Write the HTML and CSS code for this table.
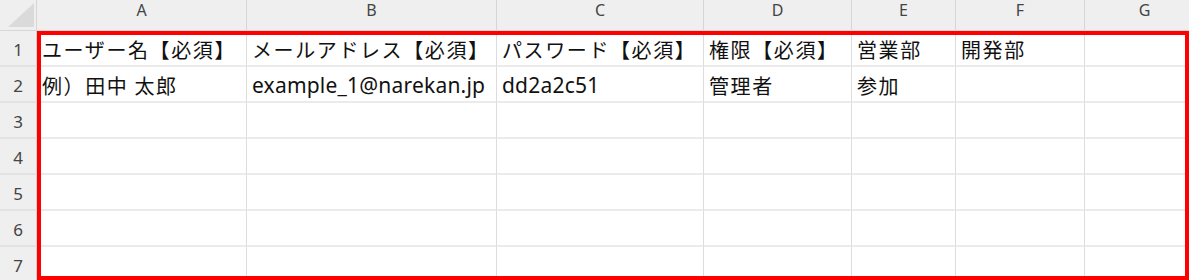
FILE: index.html
```html
<!DOCTYPE html>
<html lang="ja">
<head>
<meta charset="utf-8">
<title>ユーザー一括登録</title>
<link rel="stylesheet" href="styles.css">
</head>
<body>
<div class="sheet">
  <div class="grid">
    <div class="corner"><span class="corner-tri"></span></div>
    <div class="col-head">A</div>
    <div class="col-head">B</div>
    <div class="col-head">C</div>
    <div class="col-head">D</div>
    <div class="col-head">E</div>
    <div class="col-head">F</div>
    <div class="col-head">G</div>

    <div class="row-head">1</div>
    <div class="cell">ユーザー名【必須】</div>
    <div class="cell">メールアドレス【必須】</div>
    <div class="cell">パスワード【必須】</div>
    <div class="cell">権限【必須】</div>
    <div class="cell">営業部</div>
    <div class="cell">開発部</div>
    <div class="cell"></div>

    <div class="row-head">2</div>
    <div class="cell">例）田中 太郎</div>
    <div class="cell latin">example_1@narekan.jp</div>
    <div class="cell latin">dd2a2c51</div>
    <div class="cell">管理者</div>
    <div class="cell">参加</div>
    <div class="cell"></div>
    <div class="cell"></div>

    <div class="row-head">3</div>
    <div class="cell"></div><div class="cell"></div><div class="cell"></div><div class="cell"></div><div class="cell"></div><div class="cell"></div><div class="cell"></div>
    <div class="row-head">4</div>
    <div class="cell"></div><div class="cell"></div><div class="cell"></div><div class="cell"></div><div class="cell"></div><div class="cell"></div><div class="cell"></div>
    <div class="row-head">5</div>
    <div class="cell"></div><div class="cell"></div><div class="cell"></div><div class="cell"></div><div class="cell"></div><div class="cell"></div><div class="cell"></div>
    <div class="row-head">6</div>
    <div class="cell"></div><div class="cell"></div><div class="cell"></div><div class="cell"></div><div class="cell"></div><div class="cell"></div><div class="cell"></div>
    <div class="row-head">7</div>
    <div class="cell"></div><div class="cell"></div><div class="cell"></div><div class="cell"></div><div class="cell"></div><div class="cell"></div><div class="cell"></div>
  </div>
  <div class="highlight"></div>
</div>
</body>
</html>
```

FILE: styles.css
```css
html, body {
  margin: 0;
  padding: 0;
  background: #ffffff;
}

.sheet {
  position: relative;
  width: 1189px;
  height: 280px;
  overflow: hidden;
  font-family: "Noto Sans CJK JP", "Noto Sans", sans-serif;
}

.grid {
  display: grid;
  grid-template-columns: 37px 210px 250px 207px 148px 104px 129px 120px;
  grid-template-rows: 31px repeat(7, 36px);
}

.corner {
  position: relative;
  background: #efefef;
  border-right: 1px solid #d6d6d6;
  border-bottom: 1px solid #d6d6d6;
}

/* select-all triangle */
.corner-tri {
  position: absolute;
  right: 2px;
  bottom: 3px;
  width: 0;
  height: 0;
  border-left: 26px solid transparent;
  border-bottom: 24px solid #dadada;
}

.col-head {
  display: flex;
  justify-content: center;
  align-items: flex-start;
  background: #efefef;
  border-right: 1px solid #d6d6d6;
  border-bottom: 1px solid #d6d6d6;
  color: #444444;
  font-family: "Noto Sans", "Liberation Sans", sans-serif;
  font-size: 16px;
  line-height: 20px;
}

.row-head {
  display: flex;
  align-items: center;
  justify-content: center;
  background: #efefef;
  border-right: 1px solid #d0d0d0;
  border-bottom: 2px solid #e2e2e2;
  color: #444444;
  font-family: "Noto Sans", "Liberation Sans", sans-serif;
  font-size: 17px;
  padding-top: 2px;
}

.cell {
  display: flex;
  align-items: center;
  padding: 2px 0 0 5px;
  border-right: 1px solid #dcdcdc;
  border-bottom: 2px solid #ebebeb;
  color: #111111;
  font-size: 20px;
  letter-spacing: 1.6px;
  white-space: nowrap;
  overflow: hidden;
}

.cell.latin {
  font-family: "Noto Sans", "Noto Sans CJK JP", sans-serif;
  font-size: 21px;
  letter-spacing: 0.2px;
}

.highlight {
  position: absolute;
  left: 37px;
  top: 31px;
  width: 1152px;
  height: 249px;
  box-sizing: border-box;
  border: 4px solid #ff0000;
  pointer-events: none;
}
```
